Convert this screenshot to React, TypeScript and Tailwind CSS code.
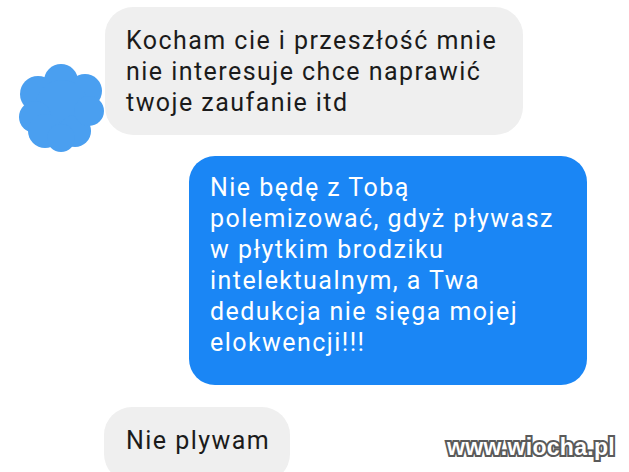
import React from 'react';

const theirFirst = ['Kocham cie i przeszłość mnie', 'nie interesuje chce naprawić', 'twoje zaufanie itd'];

const mine = [
  'Nie będę z Tobą',
  'polemizować, gdyż pływasz',
  'w płytkim brodziku',
  'intelektualnym, a Twa',
  'dedukcja nie sięga mojej',
  'elokwencji!!!',
];

// blurred-out avatar, just a blob of circles
const AvatarBlob = () => (
  <svg width="92" height="92" viewBox="0 0 92 92">
    <g fill="#4a9ff0">
      <circle cx="46" cy="20" r="17" />
      <circle cx="70" cy="30" r="17" />
      <circle cx="23" cy="33" r="18" />
      <circle cx="47" cy="46" r="27" />
      <circle cx="20" cy="56" r="16" />
      <circle cx="30" cy="70" r="17" />
      <circle cx="60" cy="70" r="16" />
      <circle cx="46" cy="77" r="14" />
      <circle cx="74" cy="50" r="15" />
    </g>
  </svg>
);

const App = () => {
  return (
    <div className="relative h-[472px] w-[629px] overflow-hidden bg-white font-['Roboto',sans-serif] text-[25px] leading-[31px] tracking-[1.45px]">
      <div className="flex flex-col pt-[7px]">
        {/* incoming message with avatar */}
        <div className="flex items-start">
          <div className="mb-[-30px] w-[105px] pl-[15px] pt-[54px]">
            <AvatarBlob />
          </div>
          <div className="w-[418px] rounded-[28px] bg-[#efefef] pb-[17px] pl-[21px] pt-[18px] text-[#1b1b1b]">
            {theirFirst.map((line) => (
              <div key={line} className="whitespace-nowrap">{line}</div>
            ))}
          </div>
        </div>

        {/* my reply */}
        <div className="mt-[21px] flex justify-end pr-[42px]">
          <div className="w-[398px] rounded-[26px] bg-[#1a86f5] pb-[27px] pl-[21px] pt-[16px] text-white">
            {mine.map((line) => (
              <div key={line} className="whitespace-nowrap">{line}</div>
            ))}
          </div>
        </div>

        {/* their answer */}
        <div className="mt-[22px] pl-[104px]">
          <div className="w-[186px] rounded-[28px] bg-[#efefef] pb-[26px] pl-[22px] pt-[18px] text-[#1b1b1b]">
            Nie plywam
          </div>
        </div>
      </div>

      {/* watermark */}
      <div className="absolute bottom-[13px] right-[14px] font-['Liberation_Sans',sans-serif] text-[23px] font-bold leading-none tracking-[0.3px] text-white [-webkit-text-stroke:4px_#5a5a5a] [paint-order:stroke_fill]">
        www.wiocha.pl
      </div>
    </div>
  );
};

export default App;
